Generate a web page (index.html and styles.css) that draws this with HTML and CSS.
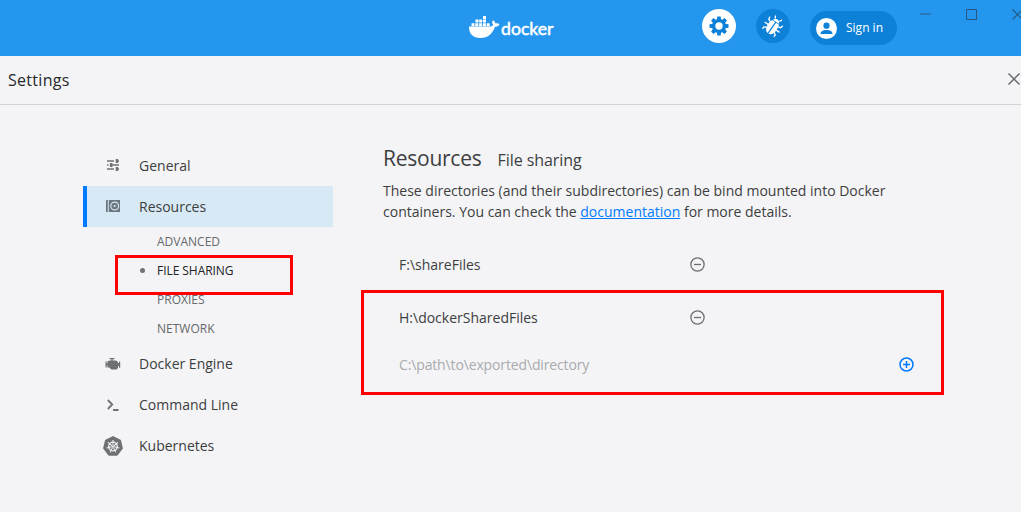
FILE: index.html
```html
<!DOCTYPE html>
<html lang="en">
<head>
<meta charset="utf-8">
<title>Docker Settings</title>
<link rel="stylesheet" href="styles.css">
</head>
<body>
<header class="topbar">
  <div class="brand">
    <svg class="whale" width="32" height="24" viewBox="0 0 32 24" fill="#fff">
      <path d="M14 1h3v3h-3zM6.500 4.500h3v3h-3zM10.200 4.500h3v3h-3zM14 4.500h3v3h-3zM2.500 8.200h3v3h-3zM6.300 8.200h3v3h-3zM10.100 8.200h3v3h-3zM13.900 8.200h3v3h-3zM17.700 8.200h3v3h-3z"/>
      <path d="M0 11.500h20.500c2 0 3.500-.7 3.700-1.800-1.400-1.400-1.300-3.200-.2-4.500 1.500.9 2.300 2 2.400 3.300 1.500-.4 3-.2 4.100.7-.9 1.900-2.700 2.600-4.600 2.600-2.100 6.800-7 11.200-14.300 11.200C3.800 23 0 19 0 11.500z"/>
    </svg>
    <svg class="wordmark" width="56" height="24" viewBox="0 0 56 24"><text x="0" y="20" textLength="52.500" lengthAdjust="spacingAndGlyphs">docker</text></svg>
  </div>
  <div class="actions">
    <button class="round round-active" aria-label="Settings">
      <svg width="20" height="20" viewBox="0 0 20 20">
        <g fill="#0d80d8"><circle cx="10" cy="10" r="7"/>
        <path id="tooth" d="M8.300.5h3.400l.5 4H7.800zM8.300 19.500h3.400l.5-4H7.800z"/>
        <use href="#tooth" transform="rotate(45 10 10)"/><use href="#tooth" transform="rotate(90 10 10)"/><use href="#tooth" transform="rotate(135 10 10)"/></g>
        <circle cx="10" cy="10" r="3.700" fill="#fff"/>
      </svg>
    </button>
    <button class="round" aria-label="Troubleshoot">
      <svg width="22" height="22" viewBox="0 0 22 22">
        <g transform="rotate(35 11 11)">
          <path fill="#fff" d="M7.500 5.800a3.600 3.600 0 0 1 7 0zM10.500 6.500v13.400C7.500 19.300 5.800 16.500 5.800 12.500c0-2.500.4-4.500 1.200-6zM11.700 6.500H15c.8 1.500 1.200 3.500 1.200 6 0 4-1.500 6.800-4.500 7.400z"/>
          <path fill="none" stroke="#fff" stroke-width="1.300" d="M8.500 3.500 7 1M13.500 3.500 15 1M6.500 9 3.800 8 3 5.200M15.500 9l2.700-1 .8-2.800M6 12.500H2M16 12.500h4M6.500 15.500 4 17v2.500M15.500 15.500 18 17v2.500"/>
        </g>
      </svg>
    </button>
    <button class="signin">
      <svg width="21" height="21" viewBox="0 0 21 21"><circle cx="10.500" cy="10.500" r="10.500" fill="#fff"/><g fill="#0d80d8"><circle cx="10.500" cy="7.700" r="3.100"/><path d="M4.500 16c0-2.600 2.500-4 6-4s6 1.400 6 4z"/></g></svg>
      <span>Sign in</span>
    </button>
  </div>
  <div class="window-controls">
    <svg width="101" height="12" viewBox="0 0 101 12" fill="none" stroke="#27577f">
      <path d="M0 5h11" stroke-width="1.500" stroke="#286fa9"/><path d="M46.500.5h10v10h-10z"/><path d="m92.500.5 10 10m0-10-10 10" stroke-width="1.200"/>
    </svg>
  </div>
</header>
<div class="page-head">
  <h1>Settings</h1>
  <svg class="close" width="14" height="14" viewBox="0 0 14 14" fill="none" stroke="#666b70" stroke-width="1.500"><path d="m1.500 1.500 11 11m0-11-11 11"/></svg>
</div>
<div class="content">
  <nav class="sidebar">
    <a class="item"><span class="icon icon-raised"><svg width="14" height="14" viewBox="0 0 14 14" stroke="#707274" stroke-width="1.300" fill="#707274"><path d="M1 3h7M11 3h2M1 7h1.500M6 7h7M1 11h7M11 11h2"/><path stroke="none" d="M9.700 1h2.500v4H9.700zM3.900 5h2.500v4H3.900zM9.700 9h2.500v4H9.700z"/></svg></span><span>General</span></a>
    <a class="item selected"><span class="icon icon-raised"><svg width="14" height="14" viewBox="0 0 14 14"><path fill="#6b7880" d="M0 1h1.800v12H0zM2.800 1H14v12H2.800z"/><circle cx="8.700" cy="7" r="3.900" fill="none" stroke="#d7e9f5" stroke-width="1.100"/><circle cx="8.700" cy="7" r="1" fill="#d7e9f5"/></svg></span><span>Resources</span></a>
    <ul class="sub">
      <li>ADVANCED</li>
      <li class="current">FILE SHARING</li>
      <li>PROXIES</li>
      <li>NETWORK</li>
    </ul>
    <a class="item"><span class="icon"><svg width="16" height="14" viewBox="0 0 16 14" fill="#6e7072"><path d="M4.500 1h5v1.200H7.700V3.500H11l2 1.500v6l-1.500 1.500h-5L4.200 10.500H2.500V4.200l2.300-.7h1.500V2.200H4.500zM.5 4.500h1.200v2H3v2H1.700v2H.5zM13 6h1V4.500h1.200v6.200H14V9h-1z"/></svg></span><span>Docker Engine</span></a>
    <a class="item"><span class="icon"><svg width="14" height="14" viewBox="0 0 14 14" fill="none" stroke="#707274" stroke-width="1.800"><path d="m1.800 2 4.400 4.500L1.800 11M7 12h5.500"/></svg></span><span>Command Line</span></a>
    <a class="item"><span class="icon"><svg width="20" height="20" viewBox="0 0 20 20"><path fill="#6e7072" stroke="#6e7072" stroke-width="1.500" stroke-linejoin="round" d="m10 .8 7.200 3.500 1.900 7.900-5 6.700H5.900l-5-6.700 1.900-7.900z"/><g fill="none" stroke="#f4f4f6" stroke-width="1"><circle cx="10" cy="10.500" r="4.300" stroke-width="1.300"/><path id="spoke" d="M10 9.300V4"/><use href="#spoke" transform="rotate(51.430 10 10.500)"/><use href="#spoke" transform="rotate(102.860 10 10.500)"/><use href="#spoke" transform="rotate(154.290 10 10.500)"/><use href="#spoke" transform="rotate(205.710 10 10.500)"/><use href="#spoke" transform="rotate(257.140 10 10.500)"/><use href="#spoke" transform="rotate(308.570 10 10.500)"/></g><circle cx="10" cy="10.500" r="1" fill="#f4f4f6"/></svg></span><span>Kubernetes</span></a>
  </nav>
  <main class="main">
    <div class="title"><h2>Resources</h2><h3>File sharing</h3></div>
    <p class="description">These directories (and their subdirectories) can be bind mounted into Docker<br>containers. You can check the <a class="link">documentation</a> for more details.</p>
    <div class="row"><span>F:\shareFiles</span><svg width="15" height="15" viewBox="0 0 15 15" fill="none" stroke="#6c6e70" stroke-width="1.300"><circle cx="7.500" cy="7.500" r="6.600"/><path d="M4 7.500h7"/></svg></div>
    <div class="row"><span>H:\dockerSharedFiles</span><svg width="15" height="15" viewBox="0 0 15 15" fill="none" stroke="#6c6e70" stroke-width="1.300"><circle cx="7.500" cy="7.500" r="6.600"/><path d="M4 7.500h7"/></svg></div>
    <div class="row row-new"><span>C:\path\to\exported\directory</span><svg width="15" height="15" viewBox="0 0 15 15" fill="none" stroke="#007bff" stroke-width="1.500"><circle cx="7.500" cy="7.500" r="6.500"/><path d="M4 7.500h7M7.500 4v7"/></svg></div>
  </main>
</div>
<div class="mark mark-nav"></div>
<div class="mark mark-paths"></div>
</body>
</html>
```
FILE: styles.css
```css
* { box-sizing: border-box; }
body {
  margin: 0;
  height: 512px;
  position: relative;
  overflow: hidden;
  background: #f4f4f6;
  color: #3c3e40;
  font: 14px/21px "Open Sans", sans-serif;
}
h1, h2, h3, p, ul { margin: 0; padding: 0; font-weight: 400; }
svg { display: block; flex: none; overflow: visible; }

.topbar { height: 56px; display: flex; background: #2496ed; }
.brand { width: 233px; margin-left: 469px; padding-top: 15px; display: flex; }
.wordmark text { font: 400 17px Lato, sans-serif; fill: #fff; stroke: #fff; stroke-width: .5px; }
.actions { width: 195px; padding-top: 9px; display: flex; align-items: flex-start; gap: 20px; }
button { border: 0; padding: 0; color: #fff; font: inherit; background: #0d80d8; }
.round { width: 34px; height: 34px; flex: none; border-radius: 50%; display: grid; place-items: center; }
.round-active { background: #fff; }
.signin { width: 87px; height: 34px; flex: none; margin-top: 2px; padding-left: 6px; display: flex; align-items: center; gap: 9px; border-radius: 17px; font-size: 12px; line-height: 19px; }
.signin span { padding-bottom: 1px; }
.window-controls { margin-left: 23px; padding-top: 9px; }

.page-head { height: 49px; padding: 0 0 0 8px; display: flex; align-items: center; border-bottom: 1px solid #d2d3d5; }
.page-head h1 { flex: 1; font-size: 16px; letter-spacing: .3px; color: #28292b; }
.close { margin: 0 0 3px 0; }

.content { display: flex; }
.sidebar { width: 250px; margin: 40px 50px 0 83px; }
.item { height: 41px; padding-left: 16px; display: flex; align-items: center; border-left: 4px solid transparent; }
.icon { width: 20px; margin-right: 16px; display: grid; place-items: center; }
.icon-raised { padding-bottom: 2px; }
.selected { background: #d7e9f5; border-color: #007bff; }
.sub { list-style: none; font-size: 12px; color: #66686a; }
.sub li { height: 29px; padding-left: 74px; line-height: 29px; }
.sub .current { padding-left: 57px; display: flex; align-items: center; gap: 12px; color: #202224; letter-spacing: -.05px; }
.current::before { content: ""; width: 5px; height: 5px; border-radius: 50%; background: #707274; }

.main { width: 560px; padding-top: 38px; }
.title { height: 37px; display: flex; align-items: baseline; gap: 16px; line-height: 30px; }
.title h2 { font-size: 21px; letter-spacing: -.25px; }
.title h3 { font-size: 16px; letter-spacing: -.05px; }
.link { color: #007bff; text-decoration: underline; }
.row { height: 53px; padding-left: 16px; display: flex; align-items: center; }
.row span { width: 291px; }
.description + .row { margin-top: 16px; }
.row-new { height: 41px; color: #a9abad; }
.row-new span { width: 500px; letter-spacing: -.14px; }

.mark { position: absolute; border: 3px solid #f00; }
.mark-nav { left: 115px; top: 255px; width: 178px; height: 40px; }
.mark-paths { left: 361px; top: 290px; width: 583px; height: 105px; }
```
